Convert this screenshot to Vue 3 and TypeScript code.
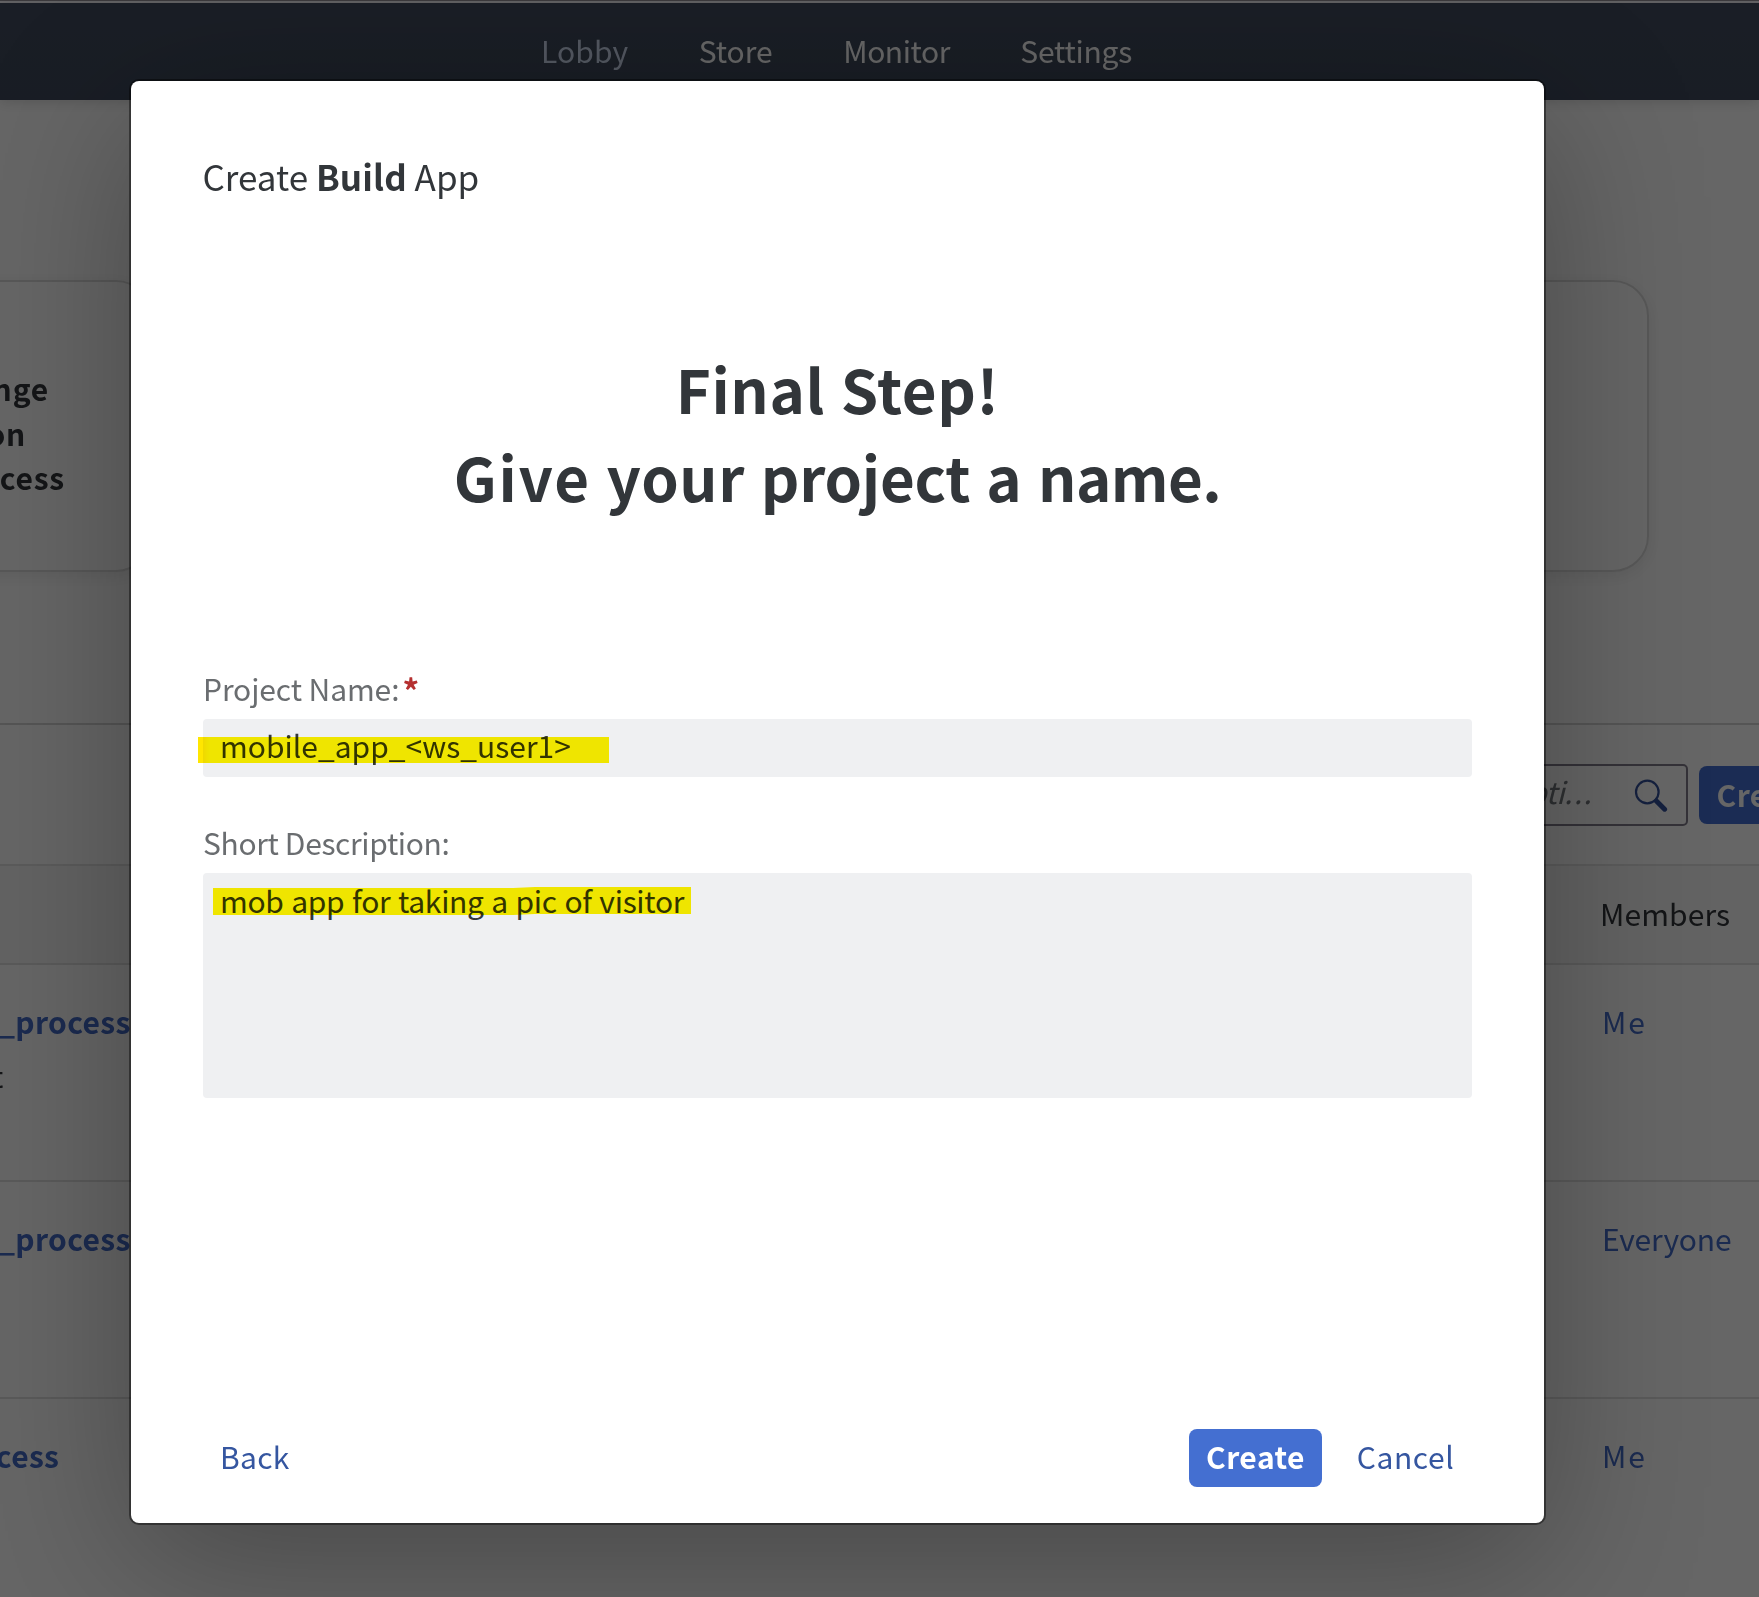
<script setup lang="ts">
import { ref } from 'vue'

interface NavItem { label: string; spacing: number; active?: boolean }
interface Member { label: string; spacing: number }
interface ProjectRow { name: string; offset: number; note?: string; members: Member }

const navItems: NavItem[] = [
  { label: 'Lobby', spacing: 0.1, active: true },
  { label: 'Store', spacing: 0 },
  { label: 'Monitor', spacing: -0.45 },
  { label: 'Settings', spacing: -0.25 },
]

const headingWords = [
  { text: 'Give', spacing: 1.7 },
  { text: 'your', spacing: 0.6 },
  { text: 'project', spacing: -0.2 },
  { text: 'a', spacing: 0.6 },
  { text: 'name.', spacing: -0.6 },
]

const cardLines = [
  { text: 'Exchange', inset: 101 },
  { text: 'on', inset: 124 },
  { text: 'process', inset: 85 },
]

const me: Member = { label: 'Me', spacing: 1.8 }
const everyone: Member = { label: 'Everyone', spacing: -0.15 }

const rows: ProjectRow[] = [
  { name: '_process_', offset: -2, note: 't', members: me },
  { name: '_process', offset: -2, members: everyone },
  { name: 'process', offset: -56, members: me },
]

const projectName = ref('mobile_app_<ws_user1>')
const description = ref('mob app for taking a pic of visitor')
</script>

<template>
  <div class="page">
    <div class="strip"></div>
    <header class="shell">
      <nav class="nav">
        <a
          v-for="item in navItems"
          :key="item.label"
          :class="{ active: item.active }"
          :style="{ letterSpacing: item.spacing + 'px' }"
        >{{ item.label }}</a>
      </nav>
    </header>

    <section class="cards">
      <div class="card first">
        <div v-for="line in cardLines" :key="line.text" class="card-line" :style="{ paddingRight: line.inset + 'px' }">{{ line.text }}</div>
      </div>
      <div class="card second"></div>
    </section>

    <section class="toolbar">
      <div class="search">
        <span class="placeholder">Name or Descripti<span class="dots">...</span></span>
        <svg class="search-icon" width="36" height="36" viewBox="0 0 36 36" fill="none" stroke="#34509c">
          <circle cx="15.3" cy="15" r="11.3" stroke-width="2.2" />
          <path d="M24.4 24 32.6 32.2" stroke-width="5" stroke-linecap="round" />
          <path d="M22.8 22.6l3 3" stroke-width="2.6" />
        </svg>
      </div>
      <button class="bg-create">Create</button>
    </section>

    <div class="thead"><span>Members</span></div>
    <div v-for="(row, i) in rows" :key="i" class="row">
      <div class="cell">
        <div class="name" :style="{ marginLeft: row.offset + 'px' }">{{ row.name }}</div>
        <div v-if="row.note" class="note">{{ row.note }}</div>
      </div>
      <div class="members" :style="{ letterSpacing: row.members.spacing + 'px' }">{{ row.members.label }}</div>
    </div>

    <div class="overlay">
      <div class="dialog">
        <div class="title">Create <b>Build</b> App</div>
        <h1>
          Final Step!<br />
          <template v-for="word in headingWords" :key="word.text"><span :style="{ letterSpacing: word.spacing + 'px' }">{{ word.text }}</span>{{ ' ' }}</template>
        </h1>

        <div class="label">Project Name:<b class="req">*</b></div>
        <div class="field input">
          <span>{{ projectName }}</span>
          <i class="mark mark-name"></i>
        </div>

        <div class="label second-label">Short Description:</div>
        <div class="field area">
          <span>{{ description }}</span>
          <i class="mark mark-desc"></i>
        </div>

        <footer>
          <button class="link back">Back</button>
          <button class="primary">Create</button>
          <button class="link cancel">Cancel</button>
        </footer>
      </div>
    </div>
  </div>
</template>

<style>
body { margin: 0; overflow: hidden; }
</style>

<style scoped>
.page {
  position: relative;
  width: 1759px;
  height: 1597px;
  overflow: hidden;
  background: #fff;
  color: #32363a;
  font-family: "Noto Sans CJK SC", "Noto Sans", sans-serif;
  font-size: 30px;
  box-sizing: border-box;
}
.page * { box-sizing: border-box; }
button {
  font: inherit;
  border: 0;
  margin: 0;
  background: none;
}
.strip {
  height: 3px;
  background: linear-gradient(#98949c 1px, #fbf9ff 1px);
}
.shell {
  position: relative;
  height: 97px;
  background: linear-gradient(#424c60, #3f4a5c);
  box-shadow: 0 2px 12px rgba(0, 0, 0, 0.14);
}
.nav {
  display: flex;
  gap: 70.5px;
  padding: 17px 0 0 541px;
  line-height: 60px;
  color: #fff;
}
.nav .active { color: #d0dcf2; }

.cards {
  display: flex;
  gap: 48px;
  height: 623px;
  margin-left: -340px;
  padding-top: 180px;
}
.card {
  flex: none;
  height: 292px;
  border: 2px solid #dcdcdc;
  border-radius: 36px;
  box-shadow: 0 4px 16px rgba(0, 0, 0, 0.08);
}
.first { width: 492px; padding-top: 84px; }
.second { width: 1449px; }
.card-line {
  text-align: right;
  font-weight: 700;
  line-height: 44.5px;
  letter-spacing: 0.8px;
}

.toolbar {
  display: flex;
  height: 143px;
  border-top: 2px solid #d5d5d5;
  border-bottom: 2px solid #e4e4e4;
  padding: 39px 0 0 1200px;
}
.search {
  flex: none;
  display: flex;
  justify-content: flex-end;
  width: 488px;
  height: 62px;
  border: 2px solid #827e8c;
  border-radius: 5px;
}
.placeholder {
  line-height: 51px;
  font-style: italic;
  letter-spacing: -0.5px;
  color: #74787d;
  white-space: nowrap;
}
.dots { letter-spacing: 1.3px; }
.search-icon { margin: 11px 18px 0 39px; }
.bg-create {
  flex: none;
  width: 133px;
  height: 58px;
  margin: 2px 0 0 11px;
  padding: 0 0 3px 1px;
  border-radius: 8px;
  background: #446fd1;
  color: #fff;
  font-weight: 700;
  letter-spacing: 0.5px;
}

.thead {
  height: 99px;
  padding-left: 1600px;
  line-height: 94px;
  letter-spacing: 0.1px;
  background: #f7f7f7;
  border-bottom: 2px solid #e0e0e0;
}
.row {
  display: flex;
  height: 217px;
  padding-top: 29px;
  line-height: 54px;
  border-bottom: 2px solid #e0e0e0;
}
.row:nth-last-child(2) { border: 0; }
.cell { flex: 0 0 1602px; }
.name {
  color: #446cc8;
  font-weight: 700;
  letter-spacing: 0.35px;
}
.note { margin-left: -8px; }
.members { color: #446cc8; }

.overlay {
  position: absolute;
  inset: 0;
  display: flex;
  padding: 81px 0 0 131px;
  background: rgba(0, 0, 0, 0.6);
}
.dialog {
  display: flex;
  flex-direction: column;
  width: 1413px;
  height: 1442px;
  padding: 70px 72px 36px;
  border-radius: 8px;
  background: #fff;
  box-shadow: 0 0 0 2px rgba(0, 0, 0, 0.42), 0 40px 160px rgba(0, 0, 0, 0.3);
}
.title {
  margin-left: -0.5px;
  font-size: 35px;
  line-height: 50px;
}
.title b { letter-spacing: 0.1px; }
h1 {
  margin: 143px 0 0;
  text-align: center;
  font-size: 60px;
  font-weight: 700;
  line-height: 88px;
  letter-spacing: 0.6px;
  word-spacing: 1.6px;
}
.label {
  margin-top: 148px;
  line-height: 40px;
  letter-spacing: -0.1px;
  color: #6a6d70;
}
.second-label { margin-top: 45px; letter-spacing: -0.35px; }
.req {
  position: relative;
  top: 3px;
  margin-left: 3px;
  font-size: 33px;
  line-height: 0;
  color: #b53030;
}
.field {
  position: relative;
  margin-top: 11px;
  padding-left: 17px;
  border-radius: 4px;
  background: #eff0f2;
}
.input { height: 58px; line-height: 52px; }
.area {
  height: 225px;
  padding-top: 7px;
  line-height: 40px;
  letter-spacing: -0.3px;
  word-spacing: 1.2px;
}
.mark {
  position: absolute;
  mix-blend-mode: multiply;
}
.mark-name {
  left: -5px;
  top: 18px;
  width: 411px;
  height: 26px;
  background: linear-gradient(90deg, #ffe600 5px, #fff400 12px);
}
.mark-desc {
  left: 10px;
  top: 14px;
  width: 478px;
  height: 28px;
  background: #fff400;
  clip-path: polygon(0 1px, 300px 1px, 322px 0, 100% 0, 100% 27px, 322px 27px, 300px 100%, 0 100%);
}
footer {
  display: flex;
  align-items: center;
  margin-top: auto;
  height: 58px;
}
footer button {
  height: 58px;
  line-height: 54px;
  padding: 0 0 4px;
}
.link { color: #3556a0; }
.back { padding-left: 17px; letter-spacing: 0.3px; }
.primary {
  width: 133px;
  margin-left: auto;
  border-radius: 8px;
  background: #446fd1;
  color: #fff;
  font-weight: 700;
  letter-spacing: 0.5px;
}
.cancel {
  width: 134px;
  margin-left: 16px;
  padding-left: 1px;
  letter-spacing: 0.6px;
}
</style>
